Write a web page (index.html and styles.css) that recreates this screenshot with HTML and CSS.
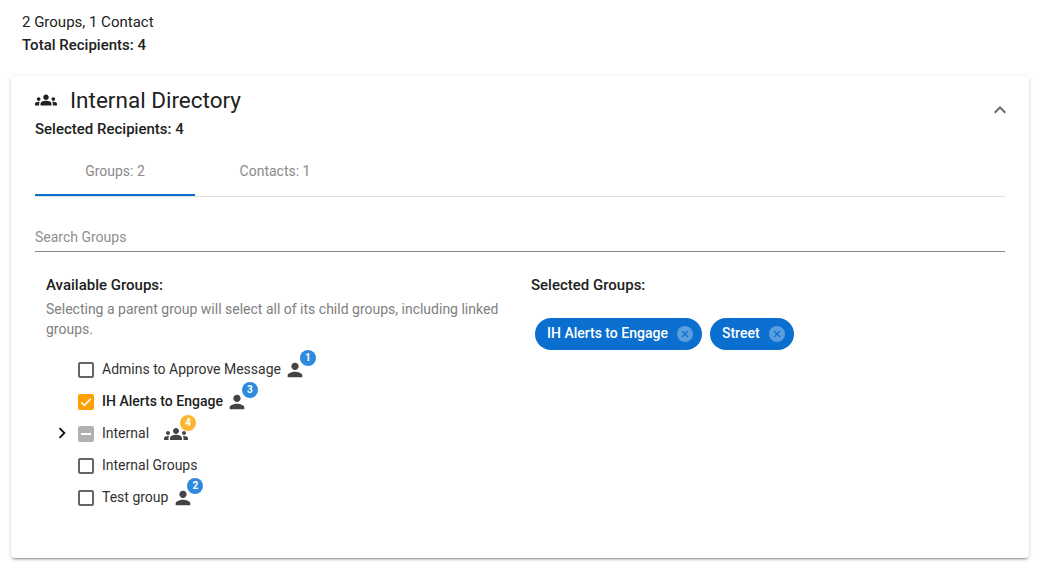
FILE: index.html
```html
<!DOCTYPE html>
<html lang="en">
<head>
<meta charset="utf-8">
<title>Internal Directory</title>
<link rel="stylesheet" href="styles.css">
</head>
<body>
<svg class="defs" width="0" height="0" aria-hidden="true">
  <symbol id="person" viewBox="0 0 24 24"><path d="M12 12c2.21 0 4-1.79 4-4s-1.79-4-4-4-4 1.79-4 4 1.79 4 4 4zm0 2c-2.67 0-8 1.34-8 4v2h16v-2c0-2.66-5.33-4-8-4z"/></symbol>
  <symbol id="groups" viewBox="0 0 24 24"><path d="M12 12.75c1.63 0 3.07.39 4.24.9 1.08.48 1.76 1.56 1.76 2.73V18H6v-1.61c0-1.18.68-2.26 1.76-2.73 1.17-.52 2.61-.91 4.24-.91zM4 13c1.1 0 2-.9 2-2s-.9-2-2-2-2 .9-2 2 .9 2 2 2zm1.13 1.1c-.37-.06-.74-.1-1.13-.1-.99 0-1.93.21-2.78.58C.48 14.9 0 15.62 0 16.43V18h4.5v-1.61c0-.83.23-1.61.63-2.29zM20 13c1.1 0 2-.9 2-2s-.9-2-2-2-2 .9-2 2 .9 2 2 2zm4 3.43c0-.81-.48-1.53-1.22-1.85-.85-.37-1.79-.58-2.78-.58-.39 0-.76.04-1.13.1.4.68.63 1.46.63 2.29V18H24v-1.57zM12 6c1.66 0 3 1.34 3 3s-1.34 3-3 3-3-1.34-3-3 1.34-3 3-3z"/></symbol>
</svg>

<header class="summary">
  <div class="summary-line">2 Groups, 1 Contact</div>
  <div class="summary-line medium">Total Recipients: 4</div>
</header>

<section class="card">
  <div class="card-head">
    <div>
      <div class="title-row">
        <svg class="title-icon"><use href="#groups"/></svg>
        <h2 class="title">Internal Directory</h2>
      </div>
      <div class="selected-count">Selected Recipients: 4</div>
    </div>
    <svg class="collapse" viewBox="0 0 24 24"><path d="M12 8l-6 6 1.41 1.41L12 10.83l4.59 4.58L18 14z"/></svg>
  </div>

  <div class="tabs">
    <div class="tab active">Groups: 2</div>
    <div class="tab">Contacts: 1</div>
  </div>

  <div class="search">Search Groups</div>

  <div class="columns">
    <div class="col-left">
      <h3 class="col-title">Available Groups:</h3>
      <p class="hint">Selecting a parent group will select all of its child groups, including linked groups.</p>
      <ul class="tree">
        <li class="row">
          <span class="expander"></span><span class="box"></span>
          <span class="label">Admins to Approve Message</span>
          <span class="count"><svg class="count-icon"><use href="#person"/></svg><span class="badge">1</span></span>
        </li>
        <li class="row">
          <span class="expander"></span>
          <span class="box checked"><svg viewBox="0 0 16 16"><path d="M3.2 8.2l3.2 3.2 6.4-6.6" fill="none" stroke="#fff" stroke-width="1.6"/></svg></span>
          <span class="label medium">IH Alerts to Engage</span>
          <span class="count"><svg class="count-icon"><use href="#person"/></svg><span class="badge">3</span></span>
        </li>
        <li class="row">
          <span class="expander"><svg viewBox="0 0 24 24"><path d="M10 6L8.59 7.41 13.17 12l-4.58 4.59L10 18l6-6z"/></svg></span>
          <span class="box mixed"><span class="dash"></span></span>
          <span class="label">Internal</span>
          <span class="count wide"><svg class="count-icon"><use href="#groups"/></svg><span class="badge amber">4</span></span>
        </li>
        <li class="row">
          <span class="expander"></span><span class="box"></span>
          <span class="label">Internal Groups</span>
        </li>
        <li class="row">
          <span class="expander"></span><span class="box"></span>
          <span class="label">Test group</span>
          <span class="count"><svg class="count-icon"><use href="#person"/></svg><span class="badge">2</span></span>
        </li>
      </ul>
    </div>
    <div class="col-right">
      <h3 class="col-title">Selected Groups:</h3>
      <div class="chips">
        <span class="chip">IH Alerts to Engage<svg class="chip-x" viewBox="0 0 16 16"><circle cx="8" cy="8" r="8" fill="#5b9ee0"/><path d="M5 5l6 6M11 5l-6 6" stroke="#0a6fce" stroke-width="1.2"/></svg></span>
        <span class="chip">Street<svg class="chip-x" viewBox="0 0 16 16"><circle cx="8" cy="8" r="8" fill="#5b9ee0"/><path d="M5 5l6 6M11 5l-6 6" stroke="#0a6fce" stroke-width="1.2"/></svg></span>
      </div>
    </div>
  </div>
</section>
</body>
</html>
```
FILE: styles.css
```css
* { box-sizing: border-box; }
html, body { margin: 0; padding: 0; }
body {
  width: 1041px;
  height: 568px;
  overflow: hidden;
  background: #fff;
  color: #212121;
  font-family: Roboto, "Liberation Sans", sans-serif;
  font-size: 14px;
}
.defs { display: block; height: 0; }
.medium { font-weight: 500; }

.summary { padding: 11px 0 0 22px; height: 76px; font-size: 15px; }
.summary-line { height: 23px; line-height: 23px; }

.card {
  margin: 0 12px 0 11px;
  height: 482px;
  padding: 12px 24px 0;
  background: #fff;
  border-radius: 4px;
  box-shadow: 0 3px 1px -2px rgba(0,0,0,.2), 0 2px 2px 0 rgba(0,0,0,.14), 0 1px 5px 0 rgba(0,0,0,.12);
}
.card-head { display: flex; justify-content: space-between; align-items: flex-start; }
.title-row { display: flex; align-items: center; height: 24px; }
.title-icon { width: 22px; height: 22px; fill: #212121; }
.title { margin: 0 0 0 13px; font-size: 22.5px; font-weight: 400; line-height: 24px; }
.selected-count { margin-top: 7px; line-height: 20px; font-size: 15px; font-weight: 500; }
.collapse { width: 24px; height: 24px; margin: 10px -7px 0 0; fill: #666; }

.tabs { display: flex; margin-top: 9px; height: 49px; border-bottom: 1px solid #e0e0e0; }
.tab {
  width: 160px;
  height: 48px;
  padding-top: 13px;
  text-align: center;
  line-height: 20px;
  color: #8a8a8a;
}
.tab.active { border-bottom: 2px solid #0a6fce; }

.search {
  margin-top: 25px;
  height: 30px;
  line-height: 30px;
  color: #8e8e8e;
  border-bottom: 1px solid #8a8a8a;
}

.columns { display: flex; }
.col-left { width: 496px; padding: 24px 0 0 11px; }
.col-right { flex: 1; padding: 24px 0 0 0; }
.col-title { margin: 0; font-size: 15px; font-weight: 500; line-height: 18px; }
.hint { margin: 5px 0 0; width: 470px; line-height: 20px; color: #808080; }

.tree { list-style: none; margin: 14px 0 0; padding: 0; }
.row { display: flex; align-items: center; height: 32px; }
.expander { width: 32px; height: 18px; }
.expander svg { display: block; width: 22px; height: 22px; margin: -2px 0 0 5px; fill: #111; }
.box {
  width: 16px; height: 16px;
  margin: 1px 8px 0 0;
  border: 2px solid #666;
  border-radius: 2px;
  flex: none;
}
.box svg { display: block; width: 16px; height: 16px; }
.box.checked { background: #ffa000; border: 0; }
.box.mixed { background: #b0b0b0; border: 0; display: flex; align-items: center; justify-content: center; }
.dash { width: 10px; height: 2px; background: #fff; }
.label { line-height: 20px; color: #333; }
.label.medium { color: #212121; }
.count { position: relative; display: block; width: 22px; height: 22px; margin: 1px 0 0 3.5px; }
.count-icon { display: block; width: 22px; height: 22px; fill: #444; }
.count.wide { width: 24px; margin-left: 15px; }
.count.wide .count-icon { width: 24px; height: 24px; margin-top: -1px; }
.badge {
  position: absolute;
  top: -9px;
  right: -9.5px;
  width: 16px; height: 16px;
  border-radius: 50%;
  background: #2f8ade;
  color: #fff;
  font-size: 10px;
  font-weight: 700;
  line-height: 16px;
  text-align: center;
}
.badge.amber { background: #fbb632; top: -8px; right: -8px; }

.chips { display: flex; gap: 8px; margin: 24px 0 0 4px; }
.chip {
  display: flex;
  align-items: center;
  height: 32px;
  padding: 0 9px 2px 12px;
  border-radius: 16px;
  background: #0a6fce;
  color: #fff;
  font-weight: 500;
  line-height: 30px;
}
.chip-x { width: 16px; height: 16px; margin: 2px 0 0 9px; }
```
